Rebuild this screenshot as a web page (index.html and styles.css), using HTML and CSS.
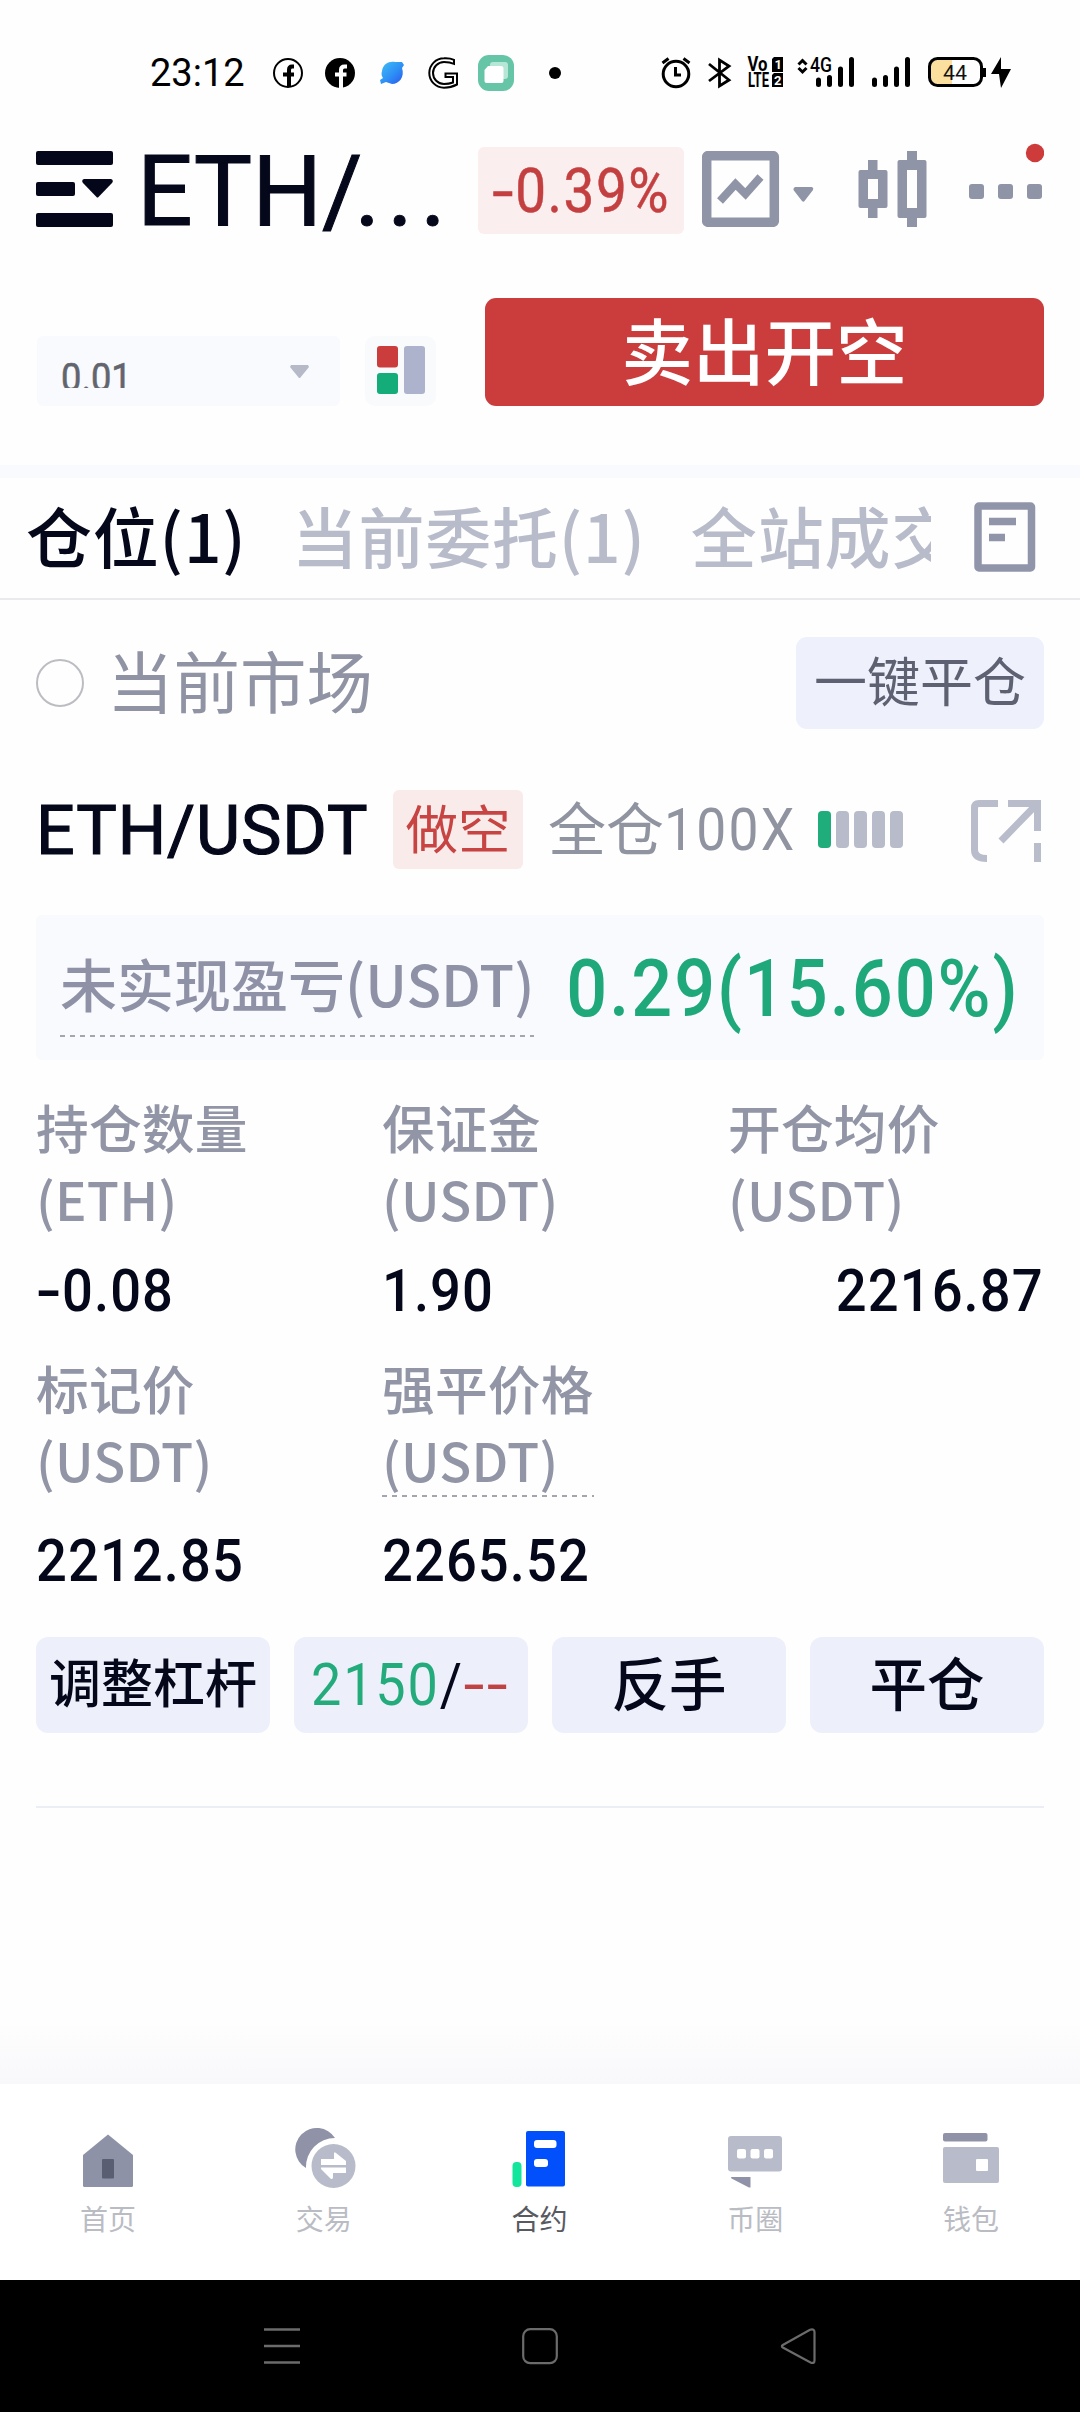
FILE: index.html
```html
<!DOCTYPE html>
<html lang="zh-CN">
<head>
<meta charset="utf-8">
<title>ETH/USDT</title>
<link rel="stylesheet" href="styles.css">
</head>
<body>
<div class="screen">
  <div class="status">
    <span class="clock">23:12</span>
    <div class="notices">
      <svg width="32" height="36" viewBox="-16 -18 32 36"><circle r="14" fill="none" stroke="#000" stroke-width="2"/><path d="M6 -6.500H4Q1 -6.500 1 -3V14M-5 1.500H6" fill="none" stroke="#000" stroke-width="4"/></svg>
      <svg width="32" height="36" viewBox="-16 -18 32 36"><circle r="15" fill="#000"/><path d="M7 -6.500H4.500Q1 -6.500 1 -3V15M-5 1.500H6.500" fill="none" stroke="#fff" stroke-width="4"/></svg>
      <svg width="32" height="36" viewBox="-16 -18 32 36"><defs><linearGradient id="planet" x1="0" y1="0" x2="1" y2="1"><stop offset="0" stop-color="#3fc0f5"/><stop offset=".55" stop-color="#2e8ff5"/><stop offset="1" stop-color="#2a55ee"/></linearGradient></defs><path d="M-10 -2C-9 -9 -3 -12 3 -11L10 -11L12 -8L10 -5C13 4 7 11 0 11L-6 9L-11 11L-12 7L-9 5C-11 2 -10.500 0 -10 -2Z" fill="url(#planet)"/></svg>
      <svg width="32" height="36" viewBox="-16 -18 32 36"><path d="M10 -13.200Q6 -15 0 -14.700A14.700 14.700 0 0 0 0 14.700Q7 14.700 13 11.500V.5H1.500V4H9V9.500Q5 11 0 11A11 11 0 0 1 0 -11Q6 -11 10 -9.200Z" fill="none" stroke="#000" stroke-width="2"/></svg>
      <svg width="36" height="36" viewBox="0 0 36 36"><rect width="36" height="36" rx="11" fill="#66c5a6"/><rect x="12" y="7" width="18" height="17" rx="3" fill="#b6e6d6"/><path d="M10 11H23Q25.500 11 25.500 13.500V26Q25.500 28 23.500 28H8.500Q6.500 28 6.500 26V15Z" fill="#fff"/></svg>
      <svg width="14" height="36" viewBox="-7 -18 14 36"><circle r="6" fill="#000"/></svg>
    </div>
    <div class="signals">
      <svg width="356" height="36" viewBox="660 55 356 36">
        <circle cx="676" cy="74" r="12.800" fill="none" stroke="#000" stroke-width="3"/>
        <path d="M662.500 63L668.500 58.500M689.500 63L683.500 58.500M675.500 67V75H681" fill="none" stroke="#000" stroke-width="3"/>
        <path d="M709 64L729 80L719.500 86V60L729 66L709 81" fill="none" stroke="#000" stroke-width="2.800"/>
        <g class="volte"><text x="747.500" y="71" textLength="20" lengthAdjust="spacingAndGlyphs">Vo</text><text x="748" y="87" textLength="21" lengthAdjust="spacingAndGlyphs">LTE</text></g>
        <path d="M774 57H783V72H772V59ZM774 73H783V87H772V75Z" fill="#000"/>
        <g class="sim"><text x="774.500" y="69">1</text><text x="774" y="84.500">2</text></g>
        <path d="M798.500 64.500L802.500 60.500L806.500 64.500M798.500 68L802.500 72L806.500 68" fill="none" stroke="#000" stroke-width="3"/>
        <text class="net" x="810" y="72" textLength="22" lengthAdjust="spacingAndGlyphs">4G</text>
        <path d="M818.500 80V84.500M829.500 77.500V84.500M840.500 69V84.500M851.500 59.500V84.500M874.500 80V84.500M885.500 77.500V84.500M896.500 69V84.500M907.500 59.500V84.500" stroke="#000" stroke-width="5" stroke-linecap="round"/>
        <path d="M952 60V84H938Q931 84 931 77V67Q931 60 938 60Z" fill="#fbdf9f"/>
        <rect x="929.500" y="58.500" width="52" height="27" rx="8" fill="none" stroke="#000" stroke-width="3"/>
        <path d="M984.500 68V77" stroke="#000" stroke-width="3"/>
        <text class="charge" x="943" y="79.500" textLength="24" lengthAdjust="spacingAndGlyphs">44</text>
        <path d="M1001 57L991 74H999L1001 88L1011 69H1001Z" fill="#000"/>
      </svg>
    </div>
  </div>

  <header class="header">
    <svg class="menu" width="77" height="76" viewBox="0 0 77 76"><g fill="#04061a"><rect width="77" height="14" rx="2"/><rect y="31" width="39" height="14" rx="2"/><rect y="62" width="77" height="14" rx="2"/><path d="M48 28H75Q78 29 76 32L62.500 46Q61.500 47 60.500 46L47 32Q45 29 48 28Z"/></g></svg>
    <h1 class="pair">ETH/<span class="more">...</span></h1>
    <span class="change"><span class="narrow"><span class="dash">-</span>0.39%</span></span>
    <svg class="tool-chart" width="112" height="76" viewBox="702 151 112 76"><rect x="706.700" y="155.700" width="67.600" height="66.600" rx="1" fill="none" stroke="#8f94a6" stroke-width="9.500"/><path d="M720 201L735.500 184L745.500 194L760.500 177" fill="none" stroke="#8f94a6" stroke-width="8"/><path d="M795 187H812Q814 188 813 190L804.500 201Q803.500 202.500 802 201L793.500 190Q793 188 795 187Z" fill="#8f94a6"/></svg>
    <svg class="tool-candles" width="69" height="76" viewBox="858 151 69 76"><path d="M868 160H877.500V170H885.500Q887.500 170 887.500 172V206Q887.500 208 885.500 208H877.500V218H868V208H860.500Q858.500 208 858.500 206V172Q858.500 170 860.500 170H868ZM868 179V199H878V179ZM907 151H917V160H924.500Q926.500 160 926.500 162V216Q926.500 218 924.500 218H917V227.500H907V218H899.500Q897.500 218 897.500 216V162Q897.500 160 899.500 160H907ZM907 170V208H917V170Z" fill="#8f94a6" fill-rule="evenodd"/></svg>
    <svg class="tool-more" width="76" height="92" viewBox="968 143 76 92"><g fill="#8f94a6"><rect x="969" y="184" width="15" height="15" rx="3"/><rect x="998" y="184" width="15" height="15" rx="3"/><rect x="1027" y="184" width="15" height="15" rx="3"/></g><circle cx="1035" cy="153" r="9.200" fill="#cd3b3b"/></svg>
  </header>

  <section class="order">
    <div class="step"><span class="step-value">0.01</span><svg width="19" height="14" viewBox="0 0 19 14"><path d="M1 0H18L19 2L10 13H9L0 2Z" fill="#b5b9c8"/></svg></div>
    <div class="layout-switch"><svg width="48" height="48" viewBox="0 0 48 48"><rect width="21" height="21.500" rx="3" fill="#cb3d3d"/><rect y="27" width="21" height="21" rx="3" fill="#14ad79"/><rect x="27" width="21" height="48" rx="3" fill="#adb2cd"/></svg></div>
    <button class="sell">卖出开空</button>
  </section>

  <nav class="tabs">
    <div class="tab-list"><span class="tab active">仓位(1)</span><span class="tab">当前委托(1)</span><span class="tab">全站成交</span></div>
    <svg width="62" height="70" viewBox="0 0 62 70"><rect x="4" y="4" width="53.500" height="62" rx="1" fill="none" stroke="#9195aa" stroke-width="7.500"/><path d="M15 19.500H42M15 35.500H31" stroke="#9195aa" stroke-width="7.500"/></svg>
  </nav>

  <div class="filter">
    <span class="radio"></span><span class="filter-name">当前市场</span>
    <button class="close-all">一键平仓</button>
  </div>

  <main class="position">
    <div class="symbol-row">
      <strong class="symbol">ETH/USDT</strong>
      <span class="side">做空</span>
      <span class="leverage">全仓<span class="num">100X</span></span>
      <span class="risk"><i class="on"></i><i></i><i></i><i></i><i></i></span>
      <svg class="share" width="70" height="62" viewBox="0 0 70 62"><g fill="none" stroke="#b9bdcb" stroke-width="7"><path d="M27 3.500H8Q3.500 3.500 3.500 8V50Q3.500 58.500 16 58.500"/><path d="M37 3.500H66.500V31M65 5L30 41M66.500 43V62"/></g></svg>
    </div>

    <div class="pnl"><span class="pnl-label">未实现盈亏(USDT)</span><span class="pnl-value">0.29(15.60%)</span></div>

    <div class="stats">
      <div class="stat"><div class="label">持仓数量<br>(ETH)</div><div class="value"><span class="dash">-</span>0.08</div></div>
      <div class="stat"><div class="label">保证金<br>(USDT)</div><div class="value">1.90</div></div>
      <div class="stat"><div class="label">开仓均价<br>(USDT)</div><div class="value end">2216.87</div></div>
      <div class="stat lower"><div class="label">标记价<br>(USDT)</div><div class="value">2212.85</div></div>
      <div class="stat lower"><div class="label hint">强平价格<br>(USDT)</div><div class="value">2265.52</div></div>
    </div>

    <div class="actions">
      <button class="action small">调整杠杆</button>
      <button class="action stops"><span class="narrow"><span class="up">2150</span>/<span class="down"><span class="dash">-</span><span class="dash">-</span></span></span></button>
      <button class="action">反手</button>
      <button class="action">平仓</button>
    </div>
  </main>

  <div class="fade"></div>

  <nav class="bottom-nav">
    <a class="nav-item"><svg width="60" height="64" viewBox="78 2126 60 64"><path d="M108 2134.500L133 2155V2185.500Q133 2187 131.500 2187H84.500Q83 2187 83 2185.500V2155Z" fill="#8e92a7"/><rect x="102" y="2159" width="12" height="19.500" rx="1" fill="#5a5e72"/></svg>首页</a>
    <a class="nav-item"><svg width="64" height="64" viewBox="291 2126 64 64"><path d="M305 2168A21.500 21.500 0 1 1 334 2138A29 29 0 0 0 305 2168Z" fill="#9093a7"/><circle cx="332.500" cy="2166" r="22" fill="#b8bbc9"/><path d="M320 2159H333V2154Q333 2151 335 2153L345 2161V2165H320ZM345 2167.500H320V2169L329.500 2178.500Q332 2180 332 2177V2173H345Z" fill="#fff"/></svg>交易</a>
    <a class="nav-item current"><svg width="60" height="64" viewBox="509 2126 60 64"><rect x="512.500" y="2162" width="9" height="25" rx="4" fill="#12e69d"/><rect x="526" y="2131" width="39" height="55.500" rx="2" fill="#0250fb"/><rect x="534" y="2140" width="22.500" height="8" rx="3" fill="#fff"/><rect x="534" y="2159" width="14" height="8" rx="3" fill="#fff"/></svg>合约</a>
    <a class="nav-item"><svg width="60" height="64" viewBox="726 2126 60 64"><rect x="729" y="2136" width="54" height="35.500" rx="3" fill="#b8bbc9"/><g fill="#fff"><rect x="738" y="2149" width="9" height="9.500" rx="2"/><rect x="751.500" y="2149" width="9" height="9.500" rx="2"/><rect x="765" y="2149" width="9" height="9.500" rx="2"/></g><path d="M732 2177H751.500V2187.500H750L732.500 2178.500Z" fill="#9093a7"/></svg>币圈</a>
    <a class="nav-item"><svg width="60" height="64" viewBox="942 2126 60 64"><rect x="944" y="2133" width="44.500" height="8.500" rx="2" fill="#9093a7"/><rect x="944" y="2147" width="56" height="36" rx="2" fill="#b8bbc9"/><rect x="977" y="2159" width="12" height="12" rx="1" fill="#fff"/></svg>钱包</a>
  </nav>

  <div class="system-nav">
    <svg width="36" height="37" viewBox="0 0 36 37"><path d="M0 1.500H36M0 18H36M0 34.500H36" stroke="#6b6b6b" stroke-width="2.500"/></svg>
    <svg width="36" height="37" viewBox="0 0 36 37"><rect x="1.200" y="1.200" width="33.600" height="34" rx="7" fill="none" stroke="#6b6b6b" stroke-width="2.200"/></svg>
    <svg width="36" height="37" viewBox="0 0 36 37"><path d="M2.800 17L30 1.800Q34.500 .5 34.500 4V32.500Q34.500 36 30.500 34.500L2.800 19.500Q1 18.300 2.800 17Z" fill="none" stroke="#6b6b6b" stroke-width="2.200"/></svg>
  </div>
</div>
</body>
</html>
```
FILE: styles.css
```css
* { box-sizing: border-box; }
body { margin: 0; background: #fff; font-family: "Noto Sans CJK SC", sans-serif; color: #05071a; }
button { border: 0; margin: 0; padding: 0; font: inherit; color: inherit; white-space: nowrap; }
svg { display: block; flex: none; }
.screen { width: 1080px; height: 2412px; display: flex; flex-direction: column; overflow: hidden; background: #fefefe; }
.screen > * { flex: none; }
.dash { display: inline-block; transform: scaleX(1.4); margin: 0 .06em; }
.narrow { display: inline-block; transform: scaleX(.9); }

.status { height: 120px; padding: 26px 64px 0 150px; display: flex; align-items: center; }
.clock { width: 122px; font: 400 38px/40px Roboto, sans-serif; color: #000; }
.notices { display: flex; align-items: center; gap: 20px; }
.notices svg:nth-child(5) { margin-left: -2px; }
.notices svg:nth-child(6) { margin-left: 14px; }
.signals { margin-left: auto; }
.volte { font: 700 19.500px Roboto, sans-serif; fill: #000; }
.sim { font: 700 13px Roboto, sans-serif; fill: #fff; }
.net { font: 500 20px Roboto, sans-serif; fill: #000; }
.charge { font: 400 19.500px Roboto, sans-serif; fill: #111; }

.header { height: 138px; padding: 0 36px; display: flex; align-items: center; }
.pair { width: 341px; margin: 5px 0 0 24px; font: 400 98px/110px Roboto, sans-serif; -webkit-text-stroke: 1px #05071a; white-space: nowrap; }
.more { margin-left: -8px; letter-spacing: 7px; }
.change { width: 206px; height: 87px; margin-top: 2px; border-radius: 6px; background: #fbeeee; color: #c43f40; font: 400 61px/88px Roboto, sans-serif; letter-spacing: 1.700px; -webkit-text-stroke: .5px #c43f40; white-space: nowrap; display: flex; justify-content: center; }
.tool-chart { margin-left: 18px; }
.tool-candles { margin-left: 44px; }
.tool-more { margin-left: 41px; }

.order { height: 207px; padding: 40px 36px 0 37px; display: flex; align-items: flex-start; }
.step { width: 303px; height: 70px; margin-top: 38px; padding: 0 31px 0 24px; border-radius: 6px; background: #f9fafe; display: flex; align-items: flex-start; justify-content: space-between; }
.step svg { margin-top: 29px; }
.step-value { height: 28px; margin-top: 24px; overflow: hidden; font: 400 39px/36px Roboto, sans-serif; color: #62656e; -webkit-text-stroke: .6px #62656e; transform: scaleX(.93); transform-origin: left; }
.layout-switch { width: 71px; height: 70px; margin: 38px 0 0 25px; padding-bottom: 2px; border-radius: 10px; background: #f9fafc; display: flex; align-items: center; justify-content: center; }
.sell { width: 559px; height: 108px; margin-left: auto; padding-bottom: 9px; border-radius: 11px; background: #cb3d3d; color: #fff; font-size: 71.500px; line-height: 90px; font-weight: 500; }

.tabs { height: 135px; padding: 13px 44px 0 26px; border-bottom: 2px solid #e9eaee; background: linear-gradient(#f9fafe 13px, transparent 13px); display: flex; align-items: center; justify-content: space-between; }
.tabs svg { margin-top: -2px; }
.tab-list { width: 905px; margin-top: -9px; display: flex; gap: 45px; overflow: hidden; white-space: nowrap; }
.tab { font-size: 66px; line-height: 92px; font-weight: 500; letter-spacing: .8px; color: #b8bbc9; }
.tab.active { color: #05071a; }

.filter { height: 165px; padding: 0 36px; display: flex; align-items: center; }
.radio { width: 48px; height: 48px; border: 2px solid #bcbdc2; border-radius: 50%; }
.filter-name { margin: -8px 0 0 23px; font-size: 66.500px; line-height: 90px; color: #9093a3; }
.close-all { width: 248px; height: 92px; margin-left: auto; padding-bottom: 7px; border-radius: 11px; background: #eef0fb; color: #5e6171; font-size: 53px; line-height: 79px; }

.position { height: 1255px; padding: 0 36px; }
.symbol-row { height: 128px; display: flex; align-items: center; white-space: nowrap; }
.symbol { width: 357px; margin-top: 4px; font: 400 68px/80px Roboto, sans-serif; letter-spacing: .9px; -webkit-text-stroke: 1.200px #05071a; }
.side { width: 130px; height: 79px; border-radius: 6px; background: #f9ebea; color: #c74443; font-size: 52.500px; line-height: 72px; text-align: center; }
.leverage { width: 270px; margin: -6px 0 0 25px; display: flex; align-items: center; font-size: 58px; line-height: 74px; color: #9093a0; }
.leverage .num { margin-top: 8px; font: 400 60px/70px Roboto, sans-serif; letter-spacing: 2.500px; transform: scaleX(.89); transform-origin: left; }
.risk { display: flex; gap: 5.500px; }
.risk i { width: 12.500px; height: 37px; border-radius: 4px; background: #b8bbc9; }
.risk .on { background: #1fae7b; }
.share { margin: 4px 3px 0 auto; }

.pnl { height: 145px; margin-top: 22px; padding: 0 24px 0 24px; border-radius: 6px; background: #f9fafe; display: flex; align-items: center; justify-content: space-between; white-space: nowrap; }
.pnl-label { height: 98px; margin-top: 1px; padding-bottom: 20px; font-size: 57px; line-height: 86px; font-weight: 500; color: #8f92a6; background: repeating-linear-gradient(90deg, #a4a6af 0 5px, transparent 5px 10px) 0 100% / 100% 2px no-repeat; }
.pnl-value { margin: 3px 0 0 -60px; font: 500 80px/96px Roboto, sans-serif; letter-spacing: 2.200px; color: #1fa97b; transform: scaleX(.9); transform-origin: right; }

.stats { margin-top: 30px; display: grid; grid-template-columns: 346px 346px 1fr; row-gap: 26px; }
.label { width: max-content; height: 142px; font-size: 52.700px; line-height: 72px; font-weight: 500; letter-spacing: .2px; color: #9295a6; }
.value { width: max-content; height: 69px; margin-top: 24px; font: 500 60px/70px Roboto, sans-serif; letter-spacing: 1.200px; transform: scaleX(.905); transform-origin: left; }
.value.end { margin-left: auto; transform-origin: right; }
.lower .value { margin-top: 33px; }
.hint { height: 146px; background: repeating-linear-gradient(90deg, #a4a6af 0 5px, transparent 5px 10px) 0 100% / 100% 2px no-repeat; }
.lower .hint + .value { margin-top: 29px; }

.actions { margin-top: 42px; padding-bottom: 73px; border-bottom: 2px solid #eceef6; display: grid; grid-template-columns: repeat(4, 1fr); gap: 24px; }
.action { height: 96px; padding-bottom: 8px; border-radius: 12px; background: #edf0fb; font-size: 57.500px; line-height: 82px; font-weight: 500; color: #05071a; }
.action.small { font-size: 52px; }
.action.stops { padding: 0; font: 400 60px/96px Roboto, sans-serif; letter-spacing: 2px; }
.up { color: #24ab7c; }
.down { color: #c14243; }

.fade { flex: 1 !important; background: linear-gradient(#fefefe, #f8f8fb); }

.bottom-nav { height: 196px; padding: 42px 1px 0 0; background: #fff; display: grid; grid-template-columns: repeat(5, 1fr); }
.nav-item { display: flex; flex-direction: column; align-items: center; gap: 7px; font-size: 28px; line-height: 42px; color: #babcc4; }
.nav-item.current { color: #585a62; }

.system-nav { height: 132px; padding: 0 264px; background: #000; display: flex; align-items: center; justify-content: space-between; }
```
